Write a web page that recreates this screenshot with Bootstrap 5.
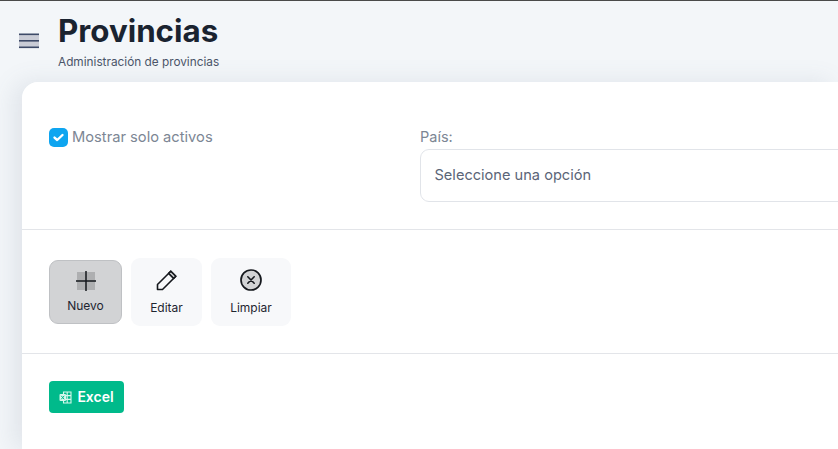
<!DOCTYPE html>
<html lang="es">
<head>
<meta charset="utf-8">
<title>Provincias</title>
<link rel="stylesheet" href="https://cdn.jsdelivr.net/npm/bootstrap@5.3.0/dist/css/bootstrap.min.css">
<style>
html,body{height:449px;overflow:hidden}
body{background:#f3f6f9;font-family:"Inter","Noto Sans",sans-serif;border-top:1px solid #4a4a4a;color:#1e2530}
.topbar{height:81px;padding-left:19px;gap:0}
.burger{width:20px;margin-top:32px;flex:none}
.burger svg{display:block}
.head-text{margin-left:19px;margin-top:12px}
.page-title{font-size:31.3px;font-weight:700;line-height:36px;margin:0;color:#1a2330;letter-spacing:0}
.page-sub{font-size:11.8px;line-height:14px;margin-top:6px;color:#4a5468}
.sheet{background:#fff;height:367px;overflow:hidden;border-radius:16px 0 0 0}
.sheet-wrap{box-shadow:-8px 0 24px rgba(90,105,135,.13);margin-left:22px;border-radius:16px 0 0 0}
.filter-zone{height:148px;padding:46px 0 0 27px;border-bottom:1px solid #e3e5e9}
.left-col{width:371px;flex:none}
.check-box{width:19px;height:19px;background:#0ea5f0;border-radius:5px;flex:none}
.check-label{font-size:14.7px;color:#7c8694;margin-left:4px;line-height:19px}
.field-label{font-size:14.5px;color:#7c8694;line-height:18px;margin-bottom:3px}
.select-box{height:53px;border:1px solid #e1e4e9;border-radius:9px;padding-left:13.5px;font-size:14.6px;color:#5b6577;width:520px}
.tools-zone{height:124px;padding-left:27px;border-bottom:1px solid #e3e5e9;gap:9px}
.tool-btn{background:#f7f8fa;border:0;border-radius:9px;height:68px;font-size:12px;color:#1e2530;padding:1px 0 0;line-height:16px}
.tool-btn svg{display:block;margin-bottom:9px}
.tool-active{background:#d2d3d5;border:1px solid #bfc1c4;height:64px;width:73px}
.tool-active svg{margin-bottom:7px}
.tool-edit{width:71px}
.tool-clear{width:80px}
.excel-zone{padding:27px 0 0 27px}
.excel-btn{background:#00ba8b;border-radius:4px;color:#fff;font-size:14px;font-weight:600;height:32px;width:75px;gap:5px;line-height:1}
</style>
</head>
<body>
<header class="topbar d-flex align-items-start">
  <div class="burger">
    <svg width="20" height="16" viewBox="0 0 20 16" aria-hidden="true"><rect x="0" y="1" width="20" height="14" fill="#c9ccd6"/><rect x="0" y="0.5" width="20" height="1.6" fill="#3d4a68"/><rect x="0" y="7" width="20" height="1.6" fill="#3d4a68"/><rect x="0" y="13.5" width="20" height="1.6" fill="#3d4a68"/></svg>
  </div>
  <div class="head-text">
    <h1 class="page-title">Provincias</h1>
    <div class="page-sub">Administración de provincias</div>
  </div>
</header>
<div class="sheet-wrap">
<main class="sheet">
  <section class="filter-zone d-flex">
    <div class="left-col d-flex align-items-start">
      <span class="check-box d-flex align-items-center justify-content-center">
        <svg width="13" height="11" viewBox="0 0 13 11" aria-hidden="true"><path d="M2.5 5.6 5.2 8 10.5 3" fill="none" stroke="#fff" stroke-width="2.4" stroke-linecap="round" stroke-linejoin="round"/></svg>
      </span>
      <span class="check-label">Mostrar solo activos</span>
    </div>
    <div class="overflow-hidden flex-grow-1">
      <div class="field-label">País:</div>
      <div class="select-box d-flex align-items-center">Seleccione una opción</div>
    </div>
  </section>
  <section class="tools-zone d-flex align-items-center">
    <button type="button" class="tool-btn tool-active d-flex flex-column align-items-center justify-content-center">
      <svg width="20" height="20" viewBox="0 0 20 20" aria-hidden="true"><rect x="1" y="1" width="18" height="18" fill="#aeafb1"/><path d="M0 10H20M10 0V20" stroke="#15181d" stroke-width="1.5"/></svg>
      Nuevo
    </button>
    <button type="button" class="tool-btn tool-edit d-flex flex-column align-items-center justify-content-center">
      <svg width="22" height="22" viewBox="0 0 22 22" aria-hidden="true"><path d="M1.5 20.5V15.5L14.8 2.2 19.8 7.2 6.5 20.5Z" fill="none" stroke="#15181d" stroke-width="1.6" stroke-linejoin="round"/><path d="M14.8 2.2 19.8 7.2 17.6 9.4 12.6 4.4Z" fill="#d2d3d5" stroke="#15181d" stroke-width="1.6" stroke-linejoin="round"/></svg>
      Editar
    </button>
    <button type="button" class="tool-btn tool-clear d-flex flex-column align-items-center justify-content-center">
      <svg width="22" height="22" viewBox="0 0 22 22" aria-hidden="true"><circle cx="11" cy="11" r="10" fill="#d2d3d5" stroke="#15181d" stroke-width="1.7"/><path d="M7.8 7.8 14.2 14.2M14.2 7.8 7.8 14.2" stroke="#15181d" stroke-width="1.6" stroke-linecap="round"/></svg>
      Limpiar
    </button>
  </section>
  <section class="excel-zone">
    <a class="excel-btn d-flex align-items-center justify-content-center text-decoration-none" href="#">
      <svg width="13" height="13" viewBox="0 0 13 13" aria-hidden="true"><path d="M4.5 1H12V12H4.5ZM4.5 4.6H12M4.5 8.4H12M8.2 1V12" fill="none" stroke="#d6f7ec" stroke-width="1.1"/><rect x="0.5" y="3" width="6.5" height="7" rx="1" fill="#d6f7ec"/><path d="M2.2 4.8 5.2 8.3M5.2 4.8 2.2 8.3" stroke="#00ba8b" stroke-width="1"/></svg>
      Excel
    </a>
  </section>
</main>
</div>
</body>
</html>
